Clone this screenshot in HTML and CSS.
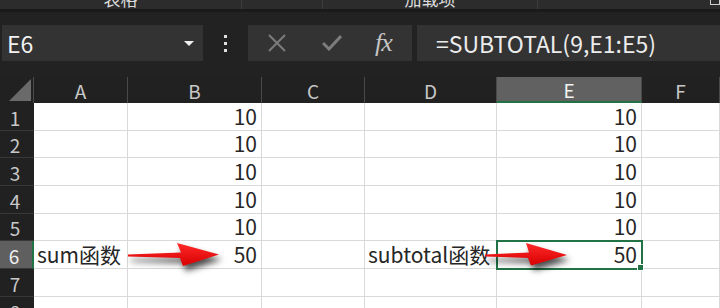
FILE: index.html
```html
<!DOCTYPE html>
<html lang="zh-CN">
<head>
    <meta charset="UTF-8">
    <title>SUM vs SUBTOTAL</title>
    <link rel="stylesheet" href="styles.css">
</head>
<body>

    <div class="ribbon">
        <div class="tab tab-first"><span>表格</span></div>
        <div class="tab tab-second"></div>
        <div class="tab tab-third"><span>加载项</span></div>
        <div class="tab tab-last"><i class="tab-icon"></i></div>
    </div>
    <div class="ribbon-edge"></div>

    <div class="toolbar">
        <div class="namebox">
            <span>E6</span>
            <svg class="drop" width="10" height="5" viewBox="0 0 10 5"><polygon points="0,0 10,0 5,5" fill="#f0f0f0"/></svg>
        </div>
        <div class="dots"><i></i><i></i><i></i></div>
        <div class="fbuttons">
            <svg width="18" height="18" viewBox="0 0 18 18"><path d="M1 1 L17 17 M17 1 L1 17" stroke="#7c7c7c" stroke-width="2"/></svg>
            <svg width="20" height="16" viewBox="0 0 20 16"><path d="M1 8 L7 14 L19 1" stroke="#7c7c7c" stroke-width="3" fill="none"/></svg>
            <span class="fx">fx</span>
        </div>
        <div class="formula">=SUBTOTAL(9,E1:E5)</div>
    </div>

    <div class="sheet">
        <div class="grid">
            <div class="corner"><i></i></div>
            <div class="colhead">A</div>
            <div class="colhead">B</div>
            <div class="colhead">C</div>
            <div class="colhead">D</div>
            <div class="colhead active">E</div>
            <div class="colhead">F</div>

            <div class="rowhead">1</div><div class="cell"></div><div class="cell num">10</div><div class="cell"></div><div class="cell"></div><div class="cell num">10</div><div class="cell"></div>
            <div class="rowhead">2</div><div class="cell"></div><div class="cell num">10</div><div class="cell"></div><div class="cell"></div><div class="cell num">10</div><div class="cell"></div>
            <div class="rowhead">3</div><div class="cell"></div><div class="cell num">10</div><div class="cell"></div><div class="cell"></div><div class="cell num">10</div><div class="cell"></div>
            <div class="rowhead">4</div><div class="cell"></div><div class="cell num">10</div><div class="cell"></div><div class="cell"></div><div class="cell num">10</div><div class="cell"></div>
            <div class="rowhead">5</div><div class="cell"></div><div class="cell num">10</div><div class="cell"></div><div class="cell"></div><div class="cell num">10</div><div class="cell"></div>
            <div class="rowhead active">6</div><div class="cell text">sum函数</div><div class="cell num">50</div><div class="cell"></div><div class="cell text">subtotal函数</div><div class="cell num selected">50</div><div class="cell"></div>
            <div class="rowhead">7</div><div class="cell"></div><div class="cell"></div><div class="cell"></div><div class="cell"></div><div class="cell"></div><div class="cell"></div>
            <div class="rowhead">8</div><div class="cell"></div><div class="cell"></div><div class="cell"></div><div class="cell"></div><div class="cell"></div><div class="cell"></div>
        </div>

        <!-- red callout arrows drawn over the sheet -->
        <svg class="arrow arrow-sum" width="96" height="26" viewBox="0 0 96 26">
            <defs>
                <linearGradient id="red1" x1="0" y1="0" x2="0" y2="1">
                    <stop offset="0" stop-color="#ff2a2a"/>
                    <stop offset="1" stop-color="#d80000"/>
                </linearGradient>
            </defs>
            <polygon points="1,11.5 54,9.5 50,0 92,11.5 56,23 53,15 1,13.5" fill="url(#red1)"/>
        </svg>
        <svg class="arrow arrow-subtotal" width="86" height="26" viewBox="0 0 86 26">
            <defs>
                <linearGradient id="red2" x1="0" y1="0" x2="0" y2="1">
                    <stop offset="0" stop-color="#ff2a2a"/>
                    <stop offset="1" stop-color="#d80000"/>
                </linearGradient>
            </defs>
            <polygon points="1,11.5 45,9.5 42,0 83,12 47,22.5 44,15 1,13.5" fill="url(#red2)"/>
        </svg>
    </div>

</body>
</html>
```

FILE: styles.css
```css
body {
    margin: 0;
    width: 720px;
    height: 308px;
    overflow: hidden;
    background-color: #222;
    font-family: "Noto Sans CJK SC", "Noto Sans", sans-serif;
}

/* ribbon tabs, cut off at the top */
.ribbon {
    display: flex;
    height: 9px;
    overflow: hidden;
    background-color: #2c2c2c;
}

.tab {
    display: flex;
    justify-content: center;
    border-right: 1px solid #3c3c3c;
    color: #dcdcdc;
    font-size: 17px;
    line-height: 18px;
}

.tab span {
    margin-top: -10px;
}

.tab-first { width: 241px; }
.tab-second { width: 80px; }
.tab-third { width: 214px; }

.tab-last {
    flex: 1;
    border-right: none;
    justify-content: flex-end;
}

.tab-icon {
    width: 8px;
    height: 4px;
    border: 1px solid #cfcfcf;
    border-top: none;
}

.ribbon-edge {
    height: 3px;
    background-color: #1a1a1a;
}

/* name box + formula bar */
.toolbar {
    display: flex;
    align-items: center;
    height: 65px;
    padding: 13px 0 16px 2px;
    box-sizing: border-box;
}

.namebox {
    display: flex;
    align-items: center;
    justify-content: space-between;
    width: 201px;
    height: 36px;
    padding: 0 9px 0 5px;
    box-sizing: border-box;
    background-color: #333;
    color: #f2f2f2;
    font-size: 23px;
}

.namebox span {
    line-height: 36px;
}

.dots {
    display: flex;
    flex-direction: column;
    align-items: center;
    gap: 4px;
    width: 45px;
}

.dots i {
    width: 3px;
    height: 3px;
    background-color: #e0e0e0;
}

.fbuttons {
    display: flex;
    align-items: center;
    width: 164px;
    height: 36px;
    padding-left: 20px;
    box-sizing: border-box;
    background-color: #333;
}

.fbuttons svg {
    margin-right: 36px;
}

.fbuttons svg + svg {
    margin-right: 33px;
}

.fx {
    color: #c4c4c4;
    font-family: "Liberation Serif", serif;
    font-style: italic;
    font-size: 26px;
    letter-spacing: -1px;
}

.formula {
    flex: 1;
    height: 36px;
    margin-left: 5px;
    padding-left: 19px;
    background-color: #333;
    color: #ececec;
    font-size: 23px;
    line-height: 36px;
}

/* worksheet */
.sheet {
    position: relative;
}

.grid {
    display: grid;
    grid-template-columns: 34px 94px 134px 103px 132px 145px 78px;
    grid-template-rows: 26px repeat(8, 27.7px);
}

.corner {
    display: flex;
    align-items: flex-end;
    justify-content: flex-end;
    padding: 0 2px 2px 0;
    border-right: 1px solid #4a4a4a;
    background-color: #212121;
}

.corner i {
    width: 0;
    height: 0;
    border-left: 22px solid transparent;
    border-bottom: 22px solid #6a6a6a;
}

.colhead {
    display: flex;
    align-items: center;
    justify-content: center;
    border-right: 1px solid #4a4a4a;
    background-color: #212121;
    color: #c8c8c8;
    font-size: 19px;
}

.colhead.active {
    background-color: #616161;
    color: #f2f2f2;
    border-bottom: 2px solid #217346;
}

.rowhead {
    display: flex;
    align-items: flex-end;
    justify-content: center;
    padding: 0 4px 0 0;
    border-bottom: 1px solid #383838;
    background-color: #212121;
    color: #c8c8c8;
    font-size: 19px;
    line-height: 25px;
}

.rowhead.active {
    background-color: #5f5f5f;
    color: #f0f0f0;
    border-right: 2px solid #217346;
}

.cell {
    display: flex;
    align-items: flex-end;
    padding: 0 4px 1px 3px;
    border-right: 1px solid #d9d9d9;
    border-bottom: 1px solid #d9d9d9;
    background-color: #fff;
    color: #262626;
    font-size: 21px;
    line-height: 26px;
    white-space: nowrap;
}

.num {
    justify-content: flex-end;
}

.selected {
    position: relative;
    outline: 2px solid #217346;
    outline-offset: -1px;
}

.selected::after {
    content: "";
    position: absolute;
    right: -3px;
    bottom: -3px;
    width: 5px;
    height: 5px;
    background-color: #217346;
    border: 1px solid #fff;
}

.arrow {
    position: absolute;
    top: 166px;
    filter: drop-shadow(3px 5px 3px rgba(0, 0, 0, 0.7));
}

.arrow-sum { left: 127px; }
.arrow-subtotal { left: 484px; }
```
